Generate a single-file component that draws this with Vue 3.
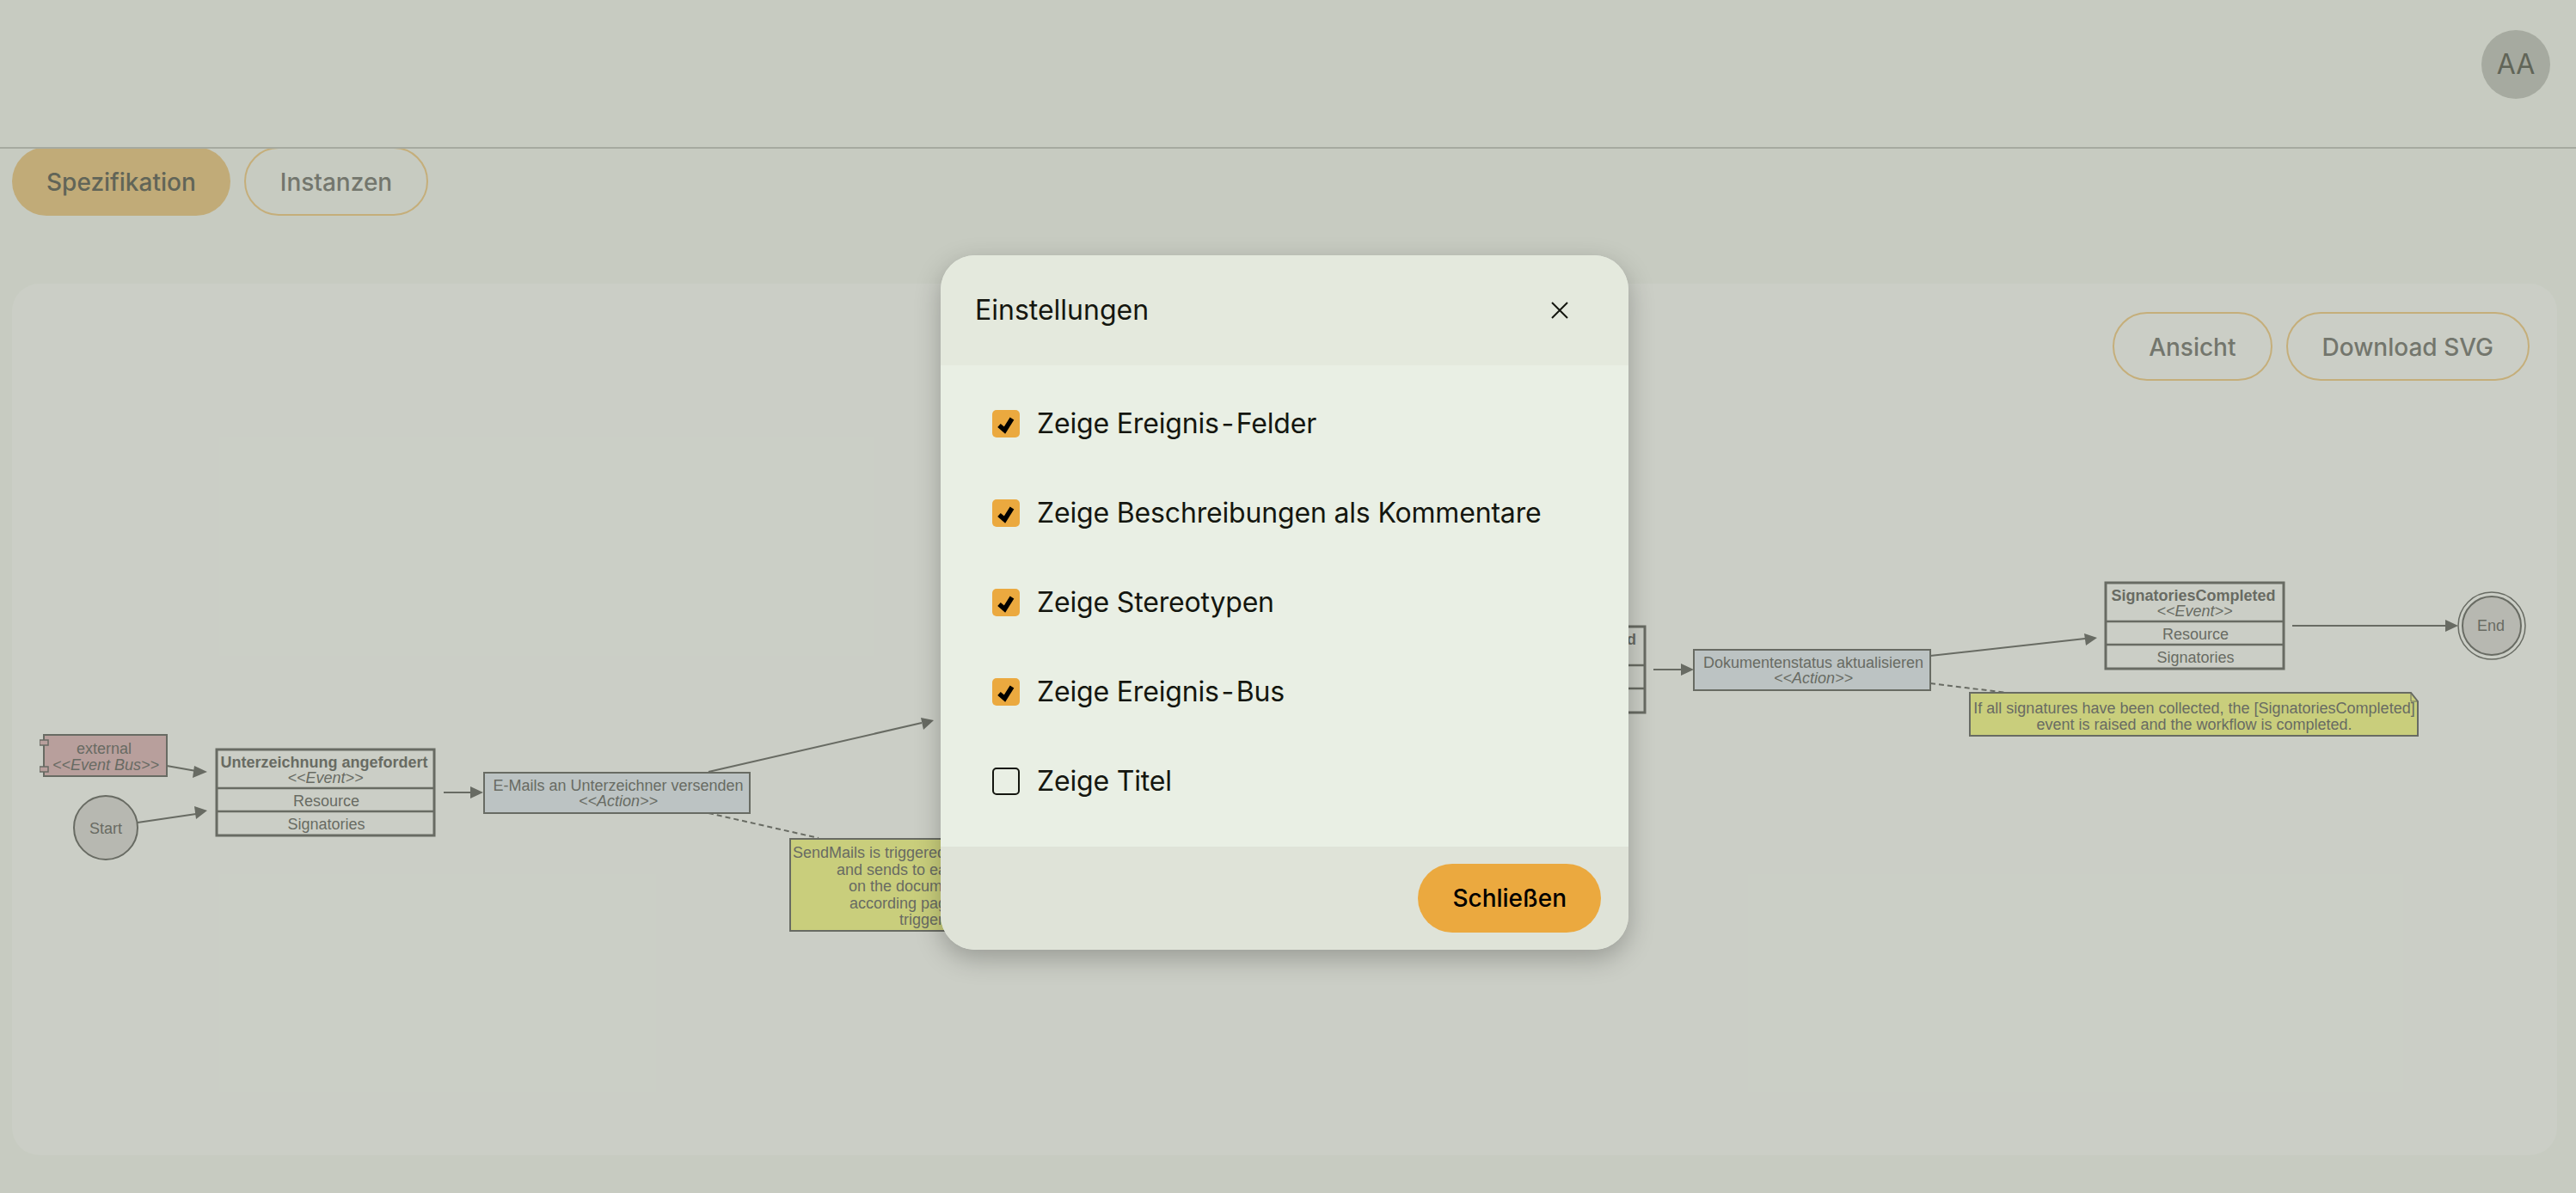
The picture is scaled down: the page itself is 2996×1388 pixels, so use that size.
<template>
  <div class="page">
    <header class="topbar">
      <div class="avatar">AA</div>
    </header>

    <div class="tabs">
      <button class="pill active">Spezifikation</button>
      <button class="pill">Instanzen</button>
    </div>

    <main class="card">
      <div class="toolbar">
        <button class="pill">Ansicht</button>
        <button class="pill">Download SVG</button>
      </div>

      <!-- viewBox uses page coordinates -->
      <svg class="diagram" viewBox="46 443 2896 860" width="2896" height="860">
        <g fill="none" stroke="#7b7e75" stroke-width="2">
          <line v-for="(a, i) in arrows" :key="i" :x1="a[0]" :y1="a[1]" :x2="a[2]" :y2="a[3]" />
          <line v-for="(d, i) in dashes" :key="'d' + i" :x1="d[0]" :y1="d[1]" :x2="d[2]" :y2="d[3]" stroke-dasharray="6 4" />
        </g>
        <polygon v-for="(h, i) in heads" :key="'h' + i" :points="h" fill="#7b7e75" />

        <!-- external -->
        <rect x="51" y="855" width="143" height="48" fill="#d9bbb8" stroke="#7b7e75" stroke-width="2" />
        <rect x="46" y="861" width="10" height="6" fill="#d9bbb8" stroke="#7b7e75" stroke-width="1.5" />
        <rect x="46" y="892" width="10" height="6" fill="#d9bbb8" stroke="#7b7e75" stroke-width="1.5" />
        <text class="t" x="121" y="877">external</text>
        <text class="t i" x="123" y="896">&lt;&lt;Event Bus&gt;&gt;</text>

        <!-- start / end -->
        <circle cx="123" cy="963" r="37" fill="#d8d9d0" stroke="#7b7e75" stroke-width="2" />
        <text class="t" x="123" y="970">Start</text>
        <circle cx="2898" cy="728" r="39" fill="none" stroke="#7b7e75" stroke-width="1.5" />
        <circle cx="2898" cy="728" r="34" fill="#d8d9d0" stroke="#7b7e75" stroke-width="2" />
        <text class="t" x="2897" y="734">End</text>

        <!-- event boxes -->
        <g v-for="e in events" :key="e.title">
          <rect :x="e.x" :y="e.y" :width="e.w" :height="100" fill="none" stroke="#7b7e75" stroke-width="3" />
          <line :x1="e.x" :y1="e.y + 45" :x2="e.x + e.w" :y2="e.y + 45" stroke="#7b7e75" stroke-width="2.5" />
          <line :x1="e.x" :y1="e.y + 72" :x2="e.x + e.w" :y2="e.y + 72" stroke="#7b7e75" stroke-width="2.5" />
          <text class="t b" :x="e.x + e.w / 2 - 1.5" :y="e.y + 21">{{ e.title }}</text>
          <text class="t i" :x="e.x + e.w / 2" :y="e.y + 39">&lt;&lt;Event&gt;&gt;</text>
          <text class="t" :x="e.x + e.w / 2 + 1" :y="e.y + 66">Resource</text>
          <text class="t" :x="e.x + e.w / 2 + 1" :y="e.y + 93">Signatories</text>
        </g>

        <!-- actions -->
        <g v-for="a in actions" :key="a.title">
          <rect :x="a.x" :y="a.y" :width="a.w" height="47" fill="#ddE6e5" stroke="#7b7e75" stroke-width="2" />
          <text class="t" :x="a.x + a.w / 2 + 1.5" :y="a.y + 21">{{ a.title }}</text>
          <text class="t i" :x="a.x + a.w / 2 + 1.5" :y="a.y + 39">&lt;&lt;Action&gt;&gt;</text>
        </g>

        <!-- notes -->
        <polygon points="919,976 1300,976 1310,986 1310,1083 919,1083" fill="#edf392" stroke="#7b7e75" stroke-width="2" />
        <text class="t s" x="922" y="998">SendMails is triggered by the event</text>
        <text class="t s" x="973" y="1018">and sends to each signatory</text>
        <text class="t s" x="987" y="1037">on the document</text>
        <text class="t s" x="988" y="1057">according page</text>
        <text class="t s" x="1046" y="1076">triggers</text>

        <polygon points="2291,806 2804,806 2812,816 2812,856 2291,856" fill="#edf392" stroke="#7b7e75" stroke-width="2" />
        <polyline points="2804,806 2804,816 2812,816" fill="none" stroke="#7b7e75" stroke-width="1" />
        <text class="t" x="2552" y="830">If all signatures have been collected, the [SignatoriesCompleted]</text>
        <text class="t" x="2552" y="849">event is raised and the workflow is completed.</text>
      </svg>
    </main>

    <div class="overlay">
      <div class="modal">
        <div class="modal-head">
          <span class="modal-title">Einstellungen</span>
          <button class="close" aria-label="close">
            <svg width="20" height="20" viewBox="0 0 20 20" fill="none" stroke="#14160f" stroke-width="2">
              <path d="M1 1l18 18M19 1L1 19" />
            </svg>
          </button>
        </div>
        <div class="modal-body">
          <label v-for="o in options" :key="o.label" class="row">
            <span class="box" :class="{ on: o.on }">
              <svg v-if="o.on" width="32" height="32" viewBox="0 0 32 32" fill="none" stroke="#000" stroke-width="5.5">
                <path d="M8 18l6.5 5.5L23 10" />
              </svg>
            </span>
            <span class="label">{{ o.label }}</span>
          </label>
        </div>
        <div class="modal-foot">
          <button class="close-btn">Schließen</button>
        </div>
      </div>
    </div>
  </div>
</template>

<script setup>
const options = [
  { label: 'Zeige Ereignis\u200A-\u200AFelder', on: true },
  { label: 'Zeige Beschreibungen als Kommentare', on: true },
  { label: 'Zeige Stereotypen', on: true },
  { label: 'Zeige Ereignis\u200A-\u200ABus', on: true },
  { label: 'Zeige Titel', on: false }
]

const events = [
  { title: 'Unterzeichnung angefordert', x: 252, y: 872, w: 253 },
  { title: 'SignatureReceived', x: 1734, y: 729, w: 179 },
  { title: 'SignatoriesCompleted', x: 2449, y: 678, w: 207 }
]

const actions = [
  { title: 'E-Mails an Unterzeichner versenden', x: 563, y: 899, w: 309 },
  { title: 'Dokumentenstatus aktualisieren', x: 1970, y: 756, w: 275 }
]

const arrows = [
  [194, 891, 228, 897],
  [160, 957, 228, 947],
  [516, 922, 548, 922],
  [824, 898, 1072, 841],
  [1923, 779, 1956, 779],
  [2245, 763, 2425, 743],
  [2666, 728, 2845, 728]
]

const dashes = [
  [824, 946, 952, 975],
  [2245, 795, 2334, 806]
]

const heads = [
  '241,898 226,891 224,905',
  '241,943 226,938 228,953',
  '562,922 547,915 547,929',
  '1086,838 1071,835 1074,849',
  '1970,779 1955,772 1955,786',
  '2439,742 2424,737 2426,751',
  '2859,728 2844,721 2844,735'
]
</script>

<style scoped>
.page {
  position: relative;
  width: 2996px;
  height: 1388px;
  overflow: hidden;
  background: #eaefe3;
  font-family: Inter, "Noto Sans", sans-serif;
}

.topbar {
  position: relative;
  z-index: 1;
  box-sizing: border-box;
  height: 173px;
  display: flex;
  justify-content: flex-end;
  align-items: flex-start;
  padding: 35px 30px 0 0;
  border-bottom: 2px solid #c3c8bc;
}

.avatar {
  width: 80px;
  height: 80px;
  border-radius: 50%;
  background: #c3c8bc;
  color: #737768;
  font-size: 32px;
  line-height: 80px;
  text-align: center;
}

.tabs {
  display: flex;
  gap: 16px;
  padding-left: 14px;
  margin-top: -2px;
}

.pill {
  box-sizing: border-box;
  height: 80px;
  padding: 2px 40px 0;
  border: 2px solid #e8cd90;
  border-radius: 40px;
  background: transparent;
  color: #888b80;
  font-family: inherit;
  font-size: 28px;
  font-weight: 500;
}

.pill.active {
  background: #e3c98d;
  border: 0;
  color: #737768;
}

.card {
  box-sizing: border-box;
  width: 2960px;
  height: 1014px;
  margin: 79px 0 0 14px;
  padding: 33px 32px;
  border-radius: 32px;
  background: #eff3e9;
}

.toolbar {
  display: flex;
  justify-content: flex-end;
  gap: 16px;
}

.diagram {
  display: block;
}

.t {
  font-family: "Liberation Sans", Arial, sans-serif;
  font-size: 18px;
  fill: #7b7e75;
  text-anchor: middle;
}

.b {
  font-weight: 700;
}

.i {
  font-style: italic;
}

.s {
  text-anchor: start;
}

.overlay {
  position: absolute;
  inset: 0;
  z-index: 5;
  display: flex;
  justify-content: center;
  align-items: flex-start;
  padding: 297px 8px 0 0;
  background: rgba(0, 0, 0, 0.15);
}

.modal {
  width: 800px;
  height: 808px;
  display: flex;
  flex-direction: column;
  border-radius: 40px;
  overflow: hidden;
  background: #e9efe4;
  box-shadow: 0 10px 30px rgba(0, 0, 0, 0.25);
  color: #14160f;
}

.modal-head {
  height: 128px;
  display: flex;
  align-items: center;
  justify-content: space-between;
  padding: 0 70px 0 40px;
  background: #e4e9dd;
  flex-shrink: 0;
}

.modal-title {
  padding-bottom: 2px;
  font-size: 32px;
}

.close {
  display: flex;
  padding: 0;
  border: 0;
  background: none;
}

.modal-body {
  flex: 1;
  display: flex;
  flex-direction: column;
  gap: 32px;
  padding: 32px 60px 0;
}

.row {
  height: 72px;
  display: flex;
  align-items: center;
  gap: 20px;
  font-size: 32px;
}

.label {
  padding-bottom: 2px;
  letter-spacing: -0.17px;
}

.box {
  box-sizing: border-box;
  width: 32px;
  height: 32px;
  flex-shrink: 0;
  border: 2px solid #14160f;
  border-radius: 5px;
}

.box.on {
  border: 0;
  background: #eba93f;
}

.box svg {
  display: block;
}

.modal-foot {
  height: 120px;
  flex-shrink: 0;
  display: flex;
  justify-content: flex-end;
  align-items: center;
  padding-right: 32px;
  background: #dfe3d8;
}

.close-btn {
  height: 80px;
  padding: 0 40px;
  border: 0;
  border-radius: 40px;
  background: #eba93f;
  color: #000;
  font-family: inherit;
  font-size: 28px;
  font-weight: 500;
}
</style>
